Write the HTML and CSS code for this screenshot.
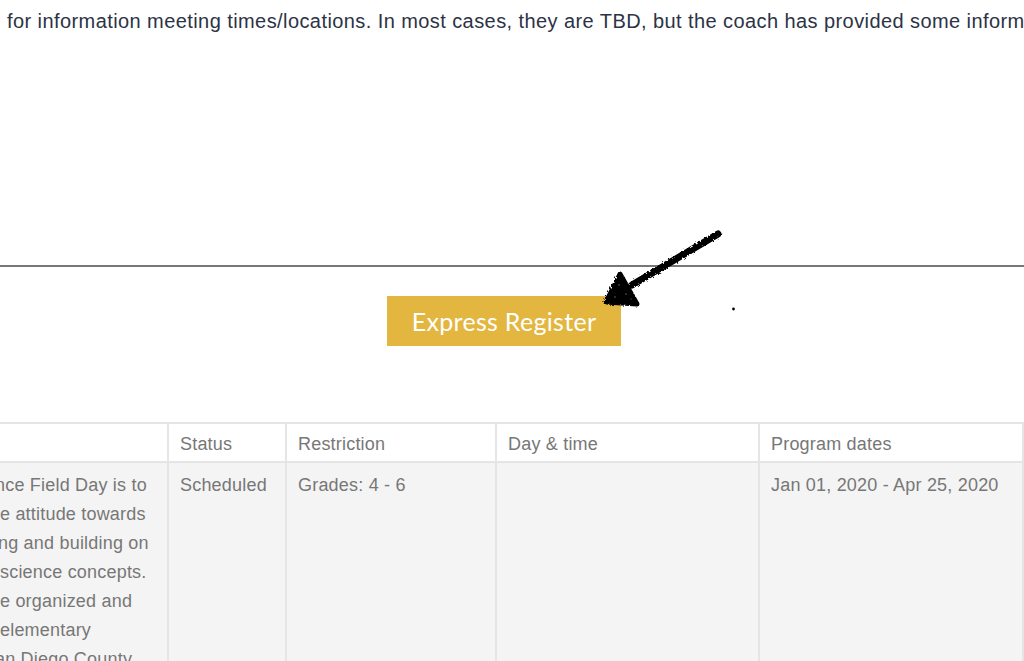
FILE: index.html
```html
<!DOCTYPE html>
<html lang="en">
<head>
  <meta charset="UTF-8">
  <meta name="viewport" content="width=device-width, initial-scale=1.0">
  <title>Express Register</title>
  <link rel="stylesheet" href="styles.css">
</head>
<body>

  <p class="intro">for information meeting times/locations. In most cases, they are TBD, but the coach has provided some information.</p>

  <hr class="divider">

  <div class="register-row">
    <a class="register-btn" href="#">Express Register</a>
  </div>

  <table class="programs">
    <thead>
      <tr>
        <th class="col-desc"></th>
        <th class="col-status">Status</th>
        <th class="col-restriction">Restriction</th>
        <th class="col-day">Day &amp; time</th>
        <th class="col-dates">Program dates</th>
      </tr>
    </thead>
    <tbody>
      <tr>
        <td class="col-desc"><span class="cut-lg">nce Field Day is to</span><br>e attitude towards<br><span class="cut-sm">ng and building on</span><br>science concepts.<br>e organized and<br>elementary<br><span class="cut-lg">an Diego County</span></td>
        <td>Scheduled</td>
        <td>Grades: 4 - 6</td>
        <td></td>
        <td>Jan 01, 2020 - Apr 25, 2020</td>
      </tr>
    </tbody>
  </table>

  <!-- Hand-drawn arrow on top of the screenshot -->
  <svg class="scribble" width="1024" height="661" viewBox="0 0 1024 661" aria-hidden="true">
    <defs>
      <filter id="rough" x="-10%" y="-10%" width="120%" height="120%">
        <feTurbulence type="fractalNoise" baseFrequency="0.45" numOctaves="2" seed="4"/>
        <feDisplacementMap in="SourceGraphic" scale="4"/>
      </filter>
    </defs>
    <g filter="url(#rough)" fill="#000" stroke="#000" stroke-linecap="round" stroke-linejoin="round">
      <path d="M718 234L632 285" fill="none" stroke-width="7"/>
      <path d="M620 274L606 302L637 304Z" stroke-width="5"/>
    </g>
    <g fill="#777">
      <circle cx="619" cy="285" r=".7"/>
      <circle cx="626" cy="294" r=".7"/>
      <circle cx="615" cy="297" r=".7"/>
      <circle cx="631" cy="299" r=".6"/>
    </g>
    <circle cx="733.500" cy="309" r="1.400" fill="#000"/>
  </svg>

</body>
</html>
```

FILE: styles.css
```css
/* Base styling */
html, body {
  height: 100%;
  overflow: hidden;
}

body {
  margin: 0;
  position: relative;
  font-family: 'Liberation Sans', Arial, sans-serif;
  background-color: #fff;
}

.intro {
  margin: 0;
  padding: 10px 0 0 7px;
  height: 23px;
  line-height: 23px;
  font-size: 20px;
  letter-spacing: 0.42px;
  color: #2c3345;
  white-space: nowrap;
}

.divider {
  margin: 232px 0 0;
  border: none;
  border-top: 2px solid #777;
}

.register-row {
  display: flex;
  padding: 29px 0 0 387px;
}

.register-btn {
  width: 234px;
  height: 50px;
  line-height: 50px;
  text-align: center;
  background: #e3b63f;
  color: #fff;
  font-family: Lato, sans-serif;
  font-size: 25px;
  letter-spacing: 0.3px;
  text-decoration: none;
}

.programs {
  margin-top: 76px;
  width: 1023px;
  table-layout: fixed;
  border-collapse: collapse;
  font-size: 18px;
  letter-spacing: 0.2px;
  color: #777;
}

.programs th, .programs td {
  box-sizing: border-box;
  padding: 0 11px;
  border: 2px solid #e5e5e5;
  text-align: left;
  font-weight: normal;
  vertical-align: top;
  white-space: nowrap;
}

.programs th {
  padding-top: 3px;
  line-height: 34px;
}

.programs td {
  padding-top: 8px;
  line-height: 29px;
  background: #f4f4f4;
}

.programs .col-desc {
  width: 168px;
  padding: 8px 0 0;
  border-left: none;
}

.programs th.col-desc { padding: 0; }

/* lines of the first column run off the left edge */
.cut-lg { margin-left: -5px; }
.cut-sm { margin-left: -2px; }

.col-status { width: 118px; }
.col-restriction { width: 210px; }
.col-day { width: 263px; }
.col-dates { width: 264px; }

.scribble {
  position: absolute;
  top: 0;
  left: 0;
  pointer-events: none;
}
```
